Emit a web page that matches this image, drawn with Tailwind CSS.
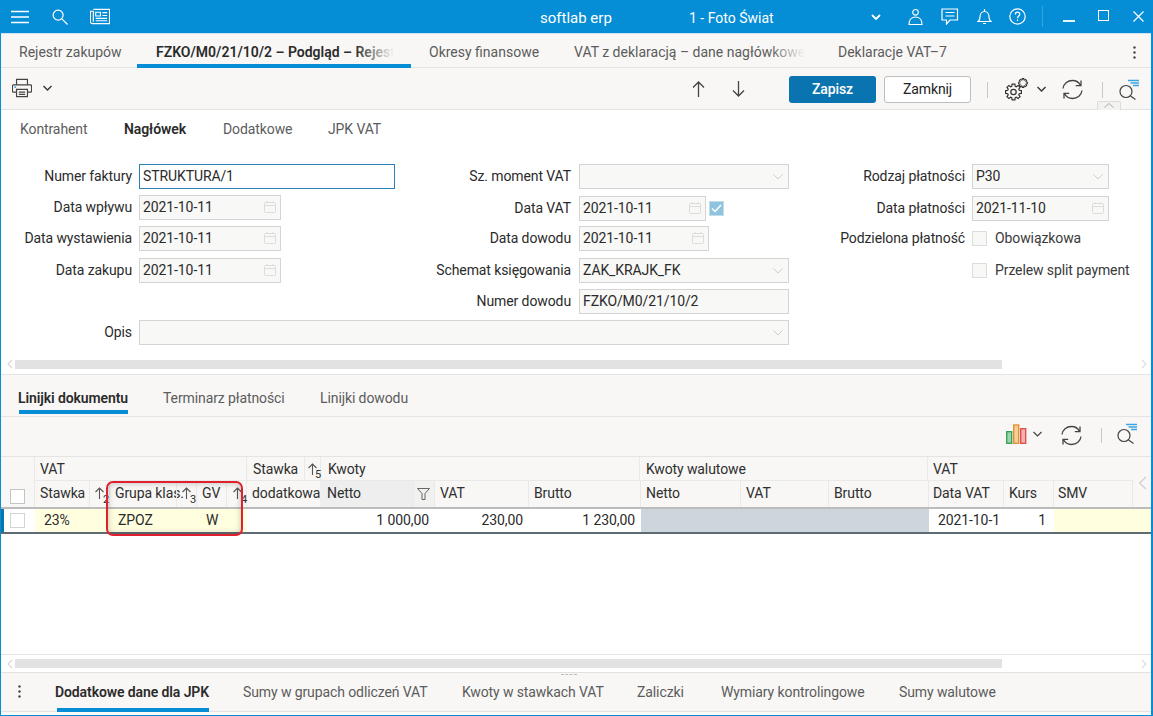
<!DOCTYPE html>
<html lang="pl"><head><meta charset="utf-8">
<script src="https://cdn.jsdelivr.net/npm/@tailwindcss/browser@4"></script>
<title>softlab erp</title></head>
<body class="m-0">
<div class="relative w-[1153px] h-[716px] overflow-hidden bg-white font-['Roboto',sans-serif] text-[14px] tracking-[-0.1px] text-[#2b2b2b] border-l border-r-2 border-b border-[#058dd6] box-border flex flex-col">

<!-- title bar -->
<header class="h-[33px] -ml-px -mr-[2px] shrink-0 bg-[#058dd6] text-white flex items-center relative">
  <svg class="ml-[11px]" width="18" height="14" viewBox="0 0 18 14" stroke="#fff" stroke-width="1.4"><path d="M0 1.5h18M0 7h18M0 12.5h18"/></svg>
  <svg class="ml-[23px]" width="16" height="16" viewBox="0 0 17 17" fill="none" stroke="#fff" stroke-width="1.3"><circle cx="6.5" cy="6.5" r="5.3"/><path d="M10.5 10.5l6 6"/></svg>
  <svg class="ml-[22px]" width="20" height="17" viewBox="0 0 21 17" fill="none" stroke="#fff" stroke-width="1.2"><path d="M3.5 1h17v15H2.500a2 2 0 0 1-2-2V3h3v11"/><path d="M6 4h5v4H6zM13 4.500h5M13 7.500h5M6 10.500h12M6 13h12"/></svg>
  <span class="absolute left-[540px] top-[8px] text-[15px] tracking-normal leading-[20px]">softlab erp</span>
  <span class="absolute left-[689px] top-[8px] text-[14px] tracking-normal leading-[20px]">1 - Foto Świat</span>
  <svg class="absolute left-[871px] top-[14px]" width="10" height="6" viewBox="0 0 10 6" fill="none" stroke="#fff" stroke-width="1.8"><path d="M1 1l4 4 4-4"/></svg>
  <svg class="absolute left-[908px] top-[8px]" width="15" height="18" viewBox="0 0 16 18" fill="none" stroke="#fff" stroke-width="1.2"><circle cx="8" cy="4" r="3"/><path d="M1 17c0-5 3-8 7-8s7 3 7 8z"/></svg>
  <svg class="absolute left-[941px] top-[8px]" width="18" height="17" viewBox="0 0 18 17" fill="none" stroke="#fff" stroke-width="1.2"><path d="M1 1h15.500v11H9l-3.500 4v-4H1z"/><path d="M4.500 4.500h9M4.500 8h9"/></svg>
  <svg class="absolute left-[977px] top-[8px]" width="15" height="17" viewBox="0 0 15 17" fill="none" stroke="#fff" stroke-width="1.2"><path d="M1 13.500c1.500-1 2-2 2-4.500 0-3 1.800-5.500 4.500-5.500S12 6 12 9c0 2.500.5 3.500 2 4.500z"/><path d="M7.500 1v2.500M6 15.500h3"/></svg>
  <svg class="absolute left-[1009px] top-[8px]" width="17" height="17" viewBox="0 0 17 17" fill="none" stroke="#fff" stroke-width="1.2"><circle cx="8.500" cy="8.500" r="7.700"/><path d="M6.300 6.500c0-3 4.500-3 4.500-.3 0 1.800-2.300 1.800-2.300 4"/><path d="M8.500 11.500v1.500"/></svg>
  <span class="absolute left-[1042px] top-[6px] w-[1px] h-[21px] bg-white/20"></span>
  <span class="absolute left-[1063px] top-[20px] w-[12px] h-[1.500px] bg-white/90"></span>
  <span class="absolute left-[1098px] top-[10px] w-[11px] h-[11px] border-[1.500px] border-white"></span>
  <svg class="absolute left-[1133px] top-[11px]" width="11" height="11" viewBox="0 0 11 11" stroke="#fff" stroke-width="1.2"><path d="M.5.500l10 10M10.500.500l-10 10"/></svg>
</header>

<!-- document tabs -->
<nav class="h-[35px] shrink-0 bg-[#f8f7f5] border-t border-t-[#cfe3ee] border-b border-b-[#e4e4e2] flex relative tracking-normal text-[#5c5c5c]">
  <span class="ml-[18px] mt-[8px] leading-[20px] w-[118px]">Rejestr zakupów</span>
  <div class="relative w-[274px] h-[34px] pl-[19px] pt-[8px] leading-[20px] font-semibold text-[#2b2b2b] border-b-[4px] border-[#058dd6] overflow-hidden whitespace-nowrap">FZKO/M0/21/10/2 – Podgląd – Rejestr
    <span class="absolute right-0 top-0 w-[56px] h-[30px] bg-gradient-to-r from-transparent to-[#f8f7f5] to-70%"></span>
  </div>
  <span class="ml-[18px] mt-[8px] leading-[20px] w-[145px]">Okresy finansowe</span>
  <div class="relative mt-[8px] leading-[20px] w-[231px] overflow-hidden whitespace-nowrap">VAT z deklaracją – dane nagłówkowe
    <span class="absolute right-0 top-0 w-[36px] h-[20px] bg-gradient-to-r from-transparent to-[#f8f7f5]"></span>
  </div>
  <span class="ml-[33px] mt-[8px] leading-[20px]">Deklaracje VAT–7</span>
  <svg class="absolute left-[1132px] top-[12px]" width="3" height="13" viewBox="0 0 3 13" fill="#444"><circle cx="1.500" cy="1.500" r="1.200"/><circle cx="1.500" cy="6.500" r="1.200"/><circle cx="1.500" cy="11.500" r="1.200"/></svg>
</nav>

<!-- toolbar -->
<div class="h-[42px] shrink-0 bg-[#f8f7f5] border-b border-[#e2e2e0] relative">
  <svg class="absolute left-[11px] top-[10px]" width="20" height="20" viewBox="0 0 22 21" fill="none" stroke="#444" stroke-width="1.300"><path d="M5 7V1h12v6"/><path d="M5 15H1.500a1 1 0 0 1-1-1V8a1 1 0 0 1 1-1h19a1 1 0 0 1 1 1v6a1 1 0 0 1-1 1H17"/><path d="M5 12h12v8H5zM7.500 15h7M7.500 17.500h7"/><path d="M2.500 9.500h2" stroke="#058dd6"/></svg>
  <svg class="absolute left-[42px] top-[17px]" width="9" height="6" viewBox="0 0 9 6" fill="none" stroke="#333" stroke-width="1.300"><path d="M.5 1l4 4 4-4"/></svg>
  <svg class="absolute left-[691px] top-[13px]" width="13" height="16" viewBox="0 0 13 16" fill="none" stroke="#444" stroke-width="1.300"><path d="M6.500 16V1M1 6.500l5.500-5.500L12 6.500"/></svg>
  <svg class="absolute left-[731px] top-[13px]" width="13" height="16" viewBox="0 0 13 16" fill="none" stroke="#444" stroke-width="1.300"><path d="M6.500 0v15M1 9.500l5.500 5.500L12 9.500"/></svg>
  <button class="absolute left-[788px] top-[8px] w-[87px] h-[27px] rounded-[3px] bg-[#0a74b0] text-white font-medium text-[14px]">Zapisz</button>
  <button class="absolute left-[883px] top-[8px] w-[87px] h-[27px] rounded-[3px] bg-white border border-[#bdbdbd] text-[#222] text-[14px]">Zamknij</button>
  <span class="absolute left-[986px] top-[14px] w-[1px] h-[16px] bg-[#c8c8c8]"></span>
  <svg class="absolute left-[1004px] top-[10px]" width="23" height="23" viewBox="0 0 23 23" fill="none" stroke="#333"><g transform="translate(8.500 14)" stroke-width="1.200"><polygon points="5.74,-1.75 7.88,-1.39 7.88,1.39 5.74,1.75 5.30,2.82 6.55,4.59 4.59,6.55 2.82,5.30 1.75,5.74 1.39,7.88 -1.39,7.88 -1.75,5.74 -2.82,5.30 -4.59,6.55 -6.55,4.59 -5.30,2.82 -5.74,1.75 -7.88,1.39 -7.88,-1.39 -5.74,-1.75 -5.30,-2.82 -6.55,-4.59 -4.59,-6.55 -2.82,-5.30 -1.75,-5.74 -1.39,-7.88 1.39,-7.88 1.75,-5.74 2.82,-5.30 4.59,-6.55 6.55,-4.59 5.30,-2.82"/><circle r="2.700"/></g><g transform="translate(18 5) scale(.55)" stroke-width="2"><polygon points="5.74,-1.75 7.88,-1.39 7.88,1.39 5.74,1.75 5.30,2.82 6.55,4.59 4.59,6.55 2.82,5.30 1.75,5.74 1.39,7.88 -1.39,7.88 -1.75,5.74 -2.82,5.30 -4.59,6.55 -6.55,4.59 -5.30,2.82 -5.74,1.75 -7.88,1.39 -7.88,-1.39 -5.74,-1.75 -5.30,-2.82 -6.55,-4.59 -4.59,-6.55 -2.82,-5.30 -1.75,-5.74 -1.39,-7.88 1.39,-7.88 1.75,-5.74 2.82,-5.30 4.59,-6.55 6.55,-4.59 5.30,-2.82"/></g></svg>
  <svg class="absolute left-[1036px] top-[18px]" width="9" height="6" viewBox="0 0 9 6" fill="none" stroke="#333" stroke-width="1.300"><path d="M.5 1l4 4 4-4"/></svg>
  <svg class="absolute left-[1061px] top-[11px]" width="21" height="21" viewBox="0 0 21 21" fill="none" stroke="#444" stroke-width="1.300"><path d="M1 9.500C1.500 5 5.500 1.500 10.500 1.500c3.500 0 6.500 1.800 8 5M19 1.500v5.200h-5.200"/><path d="M20 11.500c-.5 4.500-4.500 8-9.500 8-3.500 0-6.500-1.800-8-5M2 19.500v-5.200h5.200"/></svg>
  <span class="absolute left-[1101px] top-[14px] w-[1px] h-[16px] bg-[#c8c8c8]"></span>
  <svg class="absolute left-[1118px] top-[10px]" width="21" height="23" viewBox="0 0 21 23" fill="none" stroke="#444" stroke-width="1.200"><circle cx="7" cy="13.500" r="6"/><path d="M11.500 18l5 3.500"/><path d="M9 2.500h11M11.500 5H20M14 7.500h6" stroke="#3ba5e0" stroke-width="1.400"/></svg>
  <span class="absolute left-[1096px] top-[33px] w-[24px] h-[9px] border border-b-0 border-[#dcdcda] rounded-t-[2px] bg-[#f2f2f0]"></span>
  <svg class="absolute left-[1103px] top-[35px]" width="10" height="5" viewBox="0 0 10 5" fill="none" stroke="#aaa"><path d="M.5 4.500L5 .5l4.500 4"/></svg>
</div>

<!-- header form -->
<section class="h-[264px] shrink-0 bg-white relative">
  <div class="flex h-[36px] text-[#5c5c5c] pl-[19px] pt-[9px] leading-[20px]">
    <span class="w-[104px]">Kontrahent</span>
    <span class="w-[99px] font-semibold text-[#2b2b2b]">Nagłówek</span>
    <span class="w-[105px]">Dodatkowe</span>
    <span>JPK VAT</span>
  </div>
  <div class="mt-[15px] grid grid-cols-[138px_256px_184px_210px_183px_137px] auto-rows-[31.200px] items-center text-[#2b2b2b]">
    <!-- row 1 -->
    <label class="text-right pr-[7px]">Numer faktury</label>
    <div class="h-[25px] border border-[#2a83b8] pl-[3px] leading-[23px]">STRUKTURA/1</div>
    <label class="text-right pr-[8px]">Sz. moment VAT</label>
    <div class="h-[25px] border border-[#d4d4d4] bg-[#f8f8f6] relative"><svg class="absolute right-[5px] top-[9px]" width="10" height="6" viewBox="0 0 10 6" fill="none" stroke="#ccc"><path d="M.5.500L5 5l4.500-4.500"/></svg></div>
    <label class="text-right pr-[7px]">Rodzaj płatności</label>
    <div class="h-[25px] border border-[#d4d4d4] bg-[#f8f8f6] pl-[3px] leading-[23px] relative">P30<svg class="absolute right-[5px] top-[9px]" width="10" height="6" viewBox="0 0 10 6" fill="none" stroke="#ccc"><path d="M.5.500L5 5l4.500-4.500"/></svg></div>
    <!-- row 2 -->
    <label class="text-right pr-[7px]">Data wpływu</label>
    <div class="h-[25px] w-[142px] border border-[#d4d4d4] bg-[#f8f8f6] pl-[3px] leading-[23px] relative">2021-10-11<svg class="absolute right-[4px] top-[5px]" width="12" height="12" viewBox="0 0 12 12" fill="none" stroke="#dcdcdc"><rect x=".5" y="1.500" width="11" height="10" rx="1"/><path d="M.5 4.500h11M3 0v2M9 0v2"/></svg></div>
    <label class="text-right pr-[8px] mt-[2px]">Data VAT</label>
    <div class="flex items-center gap-[3px] mt-[2px]"><div class="h-[25px] w-[127px] border border-[#d4d4d4] bg-[#f8f8f6] pl-[3px] leading-[23px] relative">2021-10-11<svg class="absolute right-[4px] top-[5px]" width="12" height="12" viewBox="0 0 12 12" fill="none" stroke="#dcdcdc"><rect x=".5" y="1.500" width="11" height="10" rx="1"/><path d="M.5 4.500h11M3 0v2M9 0v2"/></svg></div>
    <span class="w-[15px] h-[15px] bg-[#90c3e0] border border-[#c2dcea] flex items-center justify-center"><svg width="11" height="9" viewBox="0 0 11 9" fill="none" stroke="#fff" stroke-width="1.500"><path d="M1 4.500L4 7.500 10 1"/></svg></span></div>
    <label class="text-right pr-[7px] mt-[2px]">Data płatności</label>
    <div class="h-[25px] border border-[#d4d4d4] bg-[#f8f8f6] pl-[3px] leading-[23px] relative mt-[2px]">2021-11-10<svg class="absolute right-[4px] top-[5px]" width="12" height="12" viewBox="0 0 12 12" fill="none" stroke="#dcdcdc"><rect x=".5" y="1.500" width="11" height="10" rx="1"/><path d="M.5 4.500h11M3 0v2M9 0v2"/></svg></div>
    <!-- row 3 -->
    <label class="text-right pr-[7px]">Data wystawienia</label>
    <div class="h-[25px] w-[142px] border border-[#d4d4d4] bg-[#f8f8f6] pl-[3px] leading-[23px] relative">2021-10-11<svg class="absolute right-[4px] top-[5px]" width="12" height="12" viewBox="0 0 12 12" fill="none" stroke="#dcdcdc"><rect x=".5" y="1.500" width="11" height="10" rx="1"/><path d="M.5 4.500h11M3 0v2M9 0v2"/></svg></div>
    <label class="text-right pr-[8px]">Data dowodu</label>
    <div class="h-[25px] w-[130px] border border-[#d4d4d4] bg-[#f8f8f6] pl-[3px] leading-[23px] relative">2021-10-11<svg class="absolute right-[4px] top-[5px]" width="12" height="12" viewBox="0 0 12 12" fill="none" stroke="#dcdcdc"><rect x=".5" y="1.500" width="11" height="10" rx="1"/><path d="M.5 4.500h11M3 0v2M9 0v2"/></svg></div>
    <label class="text-right pr-[7px]">Podzielona płatność</label>
    <div class="flex items-center gap-[8px] text-[#3a3a3a]"><span class="w-[15px] h-[15px] shrink-0 border border-[#dcdcdc] bg-[#f8f8f6]"></span><span class="whitespace-nowrap">Obowiązkowa</span></div>
    <!-- row 4 -->
    <label class="text-right pr-[7px]">Data zakupu</label>
    <div class="h-[25px] w-[142px] border border-[#d4d4d4] bg-[#f8f8f6] pl-[3px] leading-[23px] relative">2021-10-11<svg class="absolute right-[4px] top-[5px]" width="12" height="12" viewBox="0 0 12 12" fill="none" stroke="#dcdcdc"><rect x=".5" y="1.500" width="11" height="10" rx="1"/><path d="M.5 4.500h11M3 0v2M9 0v2"/></svg></div>
    <label class="text-right pr-[8px]">Schemat księgowania</label>
    <div class="h-[25px] border border-[#d4d4d4] bg-[#f8f8f6] pl-[3px] leading-[23px] relative">ZAK_KRAJK_FK<svg class="absolute right-[5px] top-[9px]" width="10" height="6" viewBox="0 0 10 6" fill="none" stroke="#ccc"><path d="M.5.500L5 5l4.500-4.500"/></svg></div>
    <span></span>
    <div class="flex items-center gap-[8px] text-[#3a3a3a]"><span class="w-[15px] h-[15px] shrink-0 border border-[#dcdcdc] bg-[#f8f8f6]"></span><span class="whitespace-nowrap">Przelew split payment</span></div>
    <!-- row 5 -->
    <span></span><span></span>
    <label class="text-right pr-[8px]">Numer dowodu</label>
    <div class="h-[25px] border border-[#d4d4d4] bg-[#f8f8f6] pl-[3px] leading-[23px]">FZKO/M0/21/10/2</div>
    <span></span><span></span>
    <!-- row 6 -->
    <label class="text-right pr-[7px]">Opis</label>
    <div class="col-span-3 h-[25px] border border-[#d4d4d4] bg-[#f8f8f6] relative"><svg class="absolute right-[5px] top-[9px]" width="10" height="6" viewBox="0 0 10 6" fill="none" stroke="#ccc"><path d="M.5.500L5 5l4.500-4.500"/></svg></div>
    <span></span><span></span>
  </div>
  <div class="flex items-center mt-[11px] h-[10px] pl-[5px] pr-[3px]">
    <svg width="9" height="10" viewBox="0 0 9 10" fill="none" stroke="#d8d8d8" stroke-width="1.200"><path d="M6 1L2 5l4 4"/></svg>
    <div class="w-[987px] h-[9px] bg-[#e2e2e2]"></div>
    <svg class="ml-auto" width="9" height="10" viewBox="0 0 9 10" fill="none" stroke="#dedede" stroke-width="1.200"><path d="M3 1l4 4-4 4"/></svg>
  </div>
</section>

<!-- lines tabs -->
<nav class="h-[43px] shrink-0 bg-[#f8f7f5] border-t border-[#e4e4e2] border-b flex text-[#5c5c5c]">
  <div class="ml-[18px] w-[109px] h-[39px] border-b-[4px] border-[#058dd6] pt-[13px] leading-[20px] font-semibold text-[#2b2b2b] whitespace-nowrap"><span class="-ml-[1px]">Linijki dokumentu</span></div>
  <span class="ml-[35px] mt-[13px] leading-[20px] w-[157px]">Terminarz płatności</span>
  <span class="mt-[13px] leading-[20px]">Linijki dowodu</span>
</nav>

<!-- lines toolbar -->
<div class="h-[40px] shrink-0 bg-[#f8f7f5] border-b border-[#e4e4e2] relative">
  <svg class="absolute left-[1005px] top-[7px]" width="21" height="20" viewBox="0 0 21 20" stroke-width="1.300"><rect x=".7" y="7.700" width="5" height="11.600" fill="#9ed5ae" stroke="#2f9e52"/><rect x="7.700" y="1" width="5" height="18.300" fill="#f6cf96" stroke="#e58a2a"/><rect x="14.700" y="4.700" width="5" height="14.600" fill="#f3b2b2" stroke="#dc4848"/></svg>
  <svg class="absolute left-[1032px] top-[14px]" width="9" height="6" viewBox="0 0 9 6" fill="none" stroke="#444" stroke-width="1.200"><path d="M.5 1l4 4 4-4"/></svg>
  <svg class="absolute left-[1060px] top-[8px]" width="21" height="21" viewBox="0 0 21 21" fill="none" stroke="#444" stroke-width="1.300"><path d="M1 9.500C1.500 5 5.500 1.500 10.500 1.500c3.500 0 6.500 1.800 8 5M19 1.500v5.200h-5.200"/><path d="M20 11.500c-.5 4.500-4.500 8-9.500 8-3.500 0-6.500-1.800-8-5M2 19.500v-5.200h5.200"/></svg>
  <span class="absolute left-[1100px] top-[11px] w-[1px] h-[15px] bg-[#c8c8c8]"></span>
  <svg class="absolute left-[1116px] top-[5px]" width="21" height="23" viewBox="0 0 21 23" fill="none" stroke="#444" stroke-width="1.200"><circle cx="7" cy="13.500" r="6"/><path d="M11.500 18l5 3.500"/><path d="M9 2.500h11M11.500 5H20M14 7.500h6" stroke="#3ba5e0" stroke-width="1.400"/></svg>
</div>

<!-- grid -->
<div class="shrink-0 bg-[#f8f7f5] flex relative">
  <div class="w-[33px] h-[50px] flex items-end justify-center pb-[3px] pl-[0px]"><span class="w-[15px] h-[15px] bg-white border border-[#c4c4c4]"></span></div>
  <div class="flex flex-col">
    <!-- header row 1 -->
    <div class="flex h-[24px] leading-[24px] border-b border-[#e9e9e7] text-[#2f2f2f]">
      <div class="w-[212px] pl-[5px] border-l border-[#e9e9e7]">VAT</div>
      <div class="w-[58px] pl-[6px] border-l border-[#e9e9e7]">Stawka</div>
      <div class="w-[16px] border-l border-[#e9e9e7] relative"><svg class="absolute left-[2px] top-[6px]" width="11" height="12" viewBox="0 0 11 12" fill="none" stroke="#555" stroke-width="1.100"><path d="M5.500 12V1M1.500 5l4-4 4 4"/></svg><span class="absolute left-[10px] top-[12px] text-[11px] leading-[12px]">5</span></div>
      <div class="w-[319px] pl-[7px] border-l border-[#e9e9e7]">Kwoty</div>
      <div class="w-[288px] pl-[6px] border-l border-[#e9e9e7]">Kwoty walutowe</div>
      <div class="w-[205px] pl-[5px] border-l border-[#e9e9e7]">VAT</div>
    </div>
    <!-- header row 2 -->
    <div class="flex h-[26px] leading-[24px] text-[#2f2f2f]">
      <div class="w-[55px] pl-[5px] border-l border-[#e9e9e7]">Stawka</div>
      <div class="w-[20px] border-l border-[#e9e9e7] relative"><svg class="absolute left-[4px] top-[6px]" width="11" height="12" viewBox="0 0 11 12" fill="none" stroke="#555" stroke-width="1.100"><path d="M5.500 12V1M1.500 5l4-4 4 4"/></svg><span class="absolute left-[13px] top-[13px] text-[11px] leading-[12px]">2</span></div>
      <div class="w-[67px] pl-[5px] border-l border-[#e9e9e7] whitespace-nowrap">Grupa klas.</div>
      <div class="w-[20px] border-l border-[#e9e9e7] relative"><svg class="absolute left-[4px] top-[6px]" width="11" height="12" viewBox="0 0 11 12" fill="none" stroke="#555" stroke-width="1.100"><path d="M5.500 12V1M1.500 5l4-4 4 4"/></svg><span class="absolute left-[13px] top-[13px] text-[11px] leading-[12px]">3</span></div>
      <div class="w-[30px] pl-[5px] border-l border-[#e9e9e7]">GV</div>
      <div class="w-[20px] border-l border-[#e9e9e7] relative"><svg class="absolute left-[5px] top-[6px]" width="11" height="12" viewBox="0 0 11 12" fill="none" stroke="#555" stroke-width="1.100"><path d="M5.500 12V1M1.500 5l4-4 4 4"/></svg><span class="absolute left-[14px] top-[13px] text-[11px] leading-[12px]">4</span></div>
      <div class="w-[74px] pl-[5px] border-l border-[#e9e9e7] whitespace-nowrap overflow-hidden">dodatkowa</div>
      <div class="w-[93px] pl-[7px] bg-[#eeeeee]">Netto</div>
      <div class="w-[21px] border-l border-[#e9e9e7] bg-[#f1f1f0] relative"><svg class="absolute left-[3px] top-[7px]" width="13" height="12" viewBox="0 0 13 12" fill="none" stroke="#666"><path d="M.5.500h12L8 5.500V11.500H5V5.500z"/></svg></div>
      <div class="w-[94px] pl-[5px] border-l border-[#e9e9e7]">VAT</div>
      <div class="w-[112px] pl-[5px] border-l border-[#e9e9e7]">Brutto</div>
      <div class="w-[100px] pl-[5px] border-l border-[#e9e9e7]">Netto</div>
      <div class="w-[88px] pl-[5px] border-l border-[#e9e9e7]">VAT</div>
      <div class="w-[100px] pl-[5px] border-l border-[#e9e9e7]">Brutto</div>
      <div class="w-[75px] pl-[4px] border-l border-[#e9e9e7]">Data VAT</div>
      <div class="w-[50px] pl-[5px] border-l border-[#e9e9e7]">Kurs</div>
      <div class="w-[80px] pl-[4px] border-x border-[#e9e9e7]">SMV</div>
    </div>
  </div>
  <svg class="absolute left-[1137px] top-[19px]" width="9" height="14" viewBox="0 0 9 14" fill="none" stroke="#cfcfcf" stroke-width="1.200"><path d="M8 1L1.500 7 8 13"/></svg>
</div>

<!-- grid data row -->
<div class="h-[27px] shrink-0 flex items-stretch border-t-[2px] border-b-[2px] border-t-[#bcbcbc] border-b-[#5f6b73] bg-white leading-[23px] text-[#2b2b2b]">
  <div class="w-[34px] border-l-[3px] border-[#0a74b0] flex items-center pl-[6px]"><span class="w-[15px] h-[15px] bg-white border border-[#d4d4d4]"></span></div>
  <div class="w-[75px] bg-[#ffffe0] pl-[9px]">23%</div>
  <div class="w-[87px] bg-[#ffffe0] pl-[8px]">ZPOZ</div>
  <div class="w-[50px] bg-[#ffffe0] pl-[9px]">W</div>
  <div class="w-[74px]"></div>
  <div class="w-[114px] text-right pr-[6px]">1 000,00</div>
  <div class="w-[94px] text-right pr-[6px]">230,00</div>
  <div class="w-[112px] text-right pr-[6px]">1 230,00</div>
  <div class="w-[288px] bg-[#cdd6dd]"></div>
  <div class="w-[75px] pl-[9px] whitespace-nowrap overflow-hidden">2021-10-1</div>
  <div class="w-[50px] text-right pr-[8px]">1</div>
  <div class="flex-1 bg-[#ffffe0]"></div>
</div>

<!-- empty grid area -->
<div class="flex-1 bg-white border-b border-[#e4e4e2]"></div>

<!-- bottom scrollbar -->
<div class="h-[18px] shrink-0 flex items-center pl-[5px] pr-[3px] bg-white border-b border-[#e2e2e0]">
  <svg width="9" height="10" viewBox="0 0 9 10" fill="none" stroke="#d8d8d8" stroke-width="1.200"><path d="M6 1L2 5l4 4"/></svg>
  <div class="w-[987px] h-[9px] bg-[#e2e2e2]"></div>
  <svg class="ml-auto" width="9" height="10" viewBox="0 0 9 10" fill="none" stroke="#dedede" stroke-width="1.200"><path d="M3 1l4 4-4 4"/></svg>
</div>

<!-- bottom tabs -->
<nav class="h-[39px] shrink-0 bg-[#f8f7f5] border-b border-[#e2e2e0] flex relative text-[#5c5c5c]">
  <svg class="absolute left-[17px] top-[12px]" width="3" height="13" viewBox="0 0 3 13" fill="#444"><circle cx="1.500" cy="1.500" r="1.200"/><circle cx="1.500" cy="6.500" r="1.200"/><circle cx="1.500" cy="11.500" r="1.200"/></svg>
  <span class="absolute left-[560px] top-[1px] w-[16px] border-t border-dashed border-[#bbb]"></span>
  <div class="ml-[56px] w-[152px] h-[39px] border-b-[4px] border-[#058dd6] pt-[9px] leading-[20px] font-semibold text-[#2b2b2b] whitespace-nowrap"><span class="-ml-[2px]">Dodatkowe dane dla JPK</span></div>
  <span class="ml-[34px] mt-[9px] leading-[20px] w-[219px]">Sumy w grupach odliczeń VAT</span>
  <span class="mt-[9px] leading-[20px] w-[175px]">Kwoty w stawkach VAT</span>
  <span class="mt-[9px] leading-[20px] w-[84px]">Zaliczki</span>
  <span class="mt-[9px] leading-[20px] w-[178px]">Wymiary kontrolingowe</span>
  <span class="mt-[9px] leading-[20px]">Sumy walutowe</span>
</nav>
<div class="h-[3px] shrink-0 bg-[#fbfbfa]"></div>

<!-- highlight -->
<div class="absolute left-[105px] top-[481px] w-[137px] h-[55px] rounded-[7px] border-2 border-[#e0202c] shadow-[inset_0_0_6px_rgba(0,0,0,0.25)] pointer-events-none"></div>
</div>
</body></html>
